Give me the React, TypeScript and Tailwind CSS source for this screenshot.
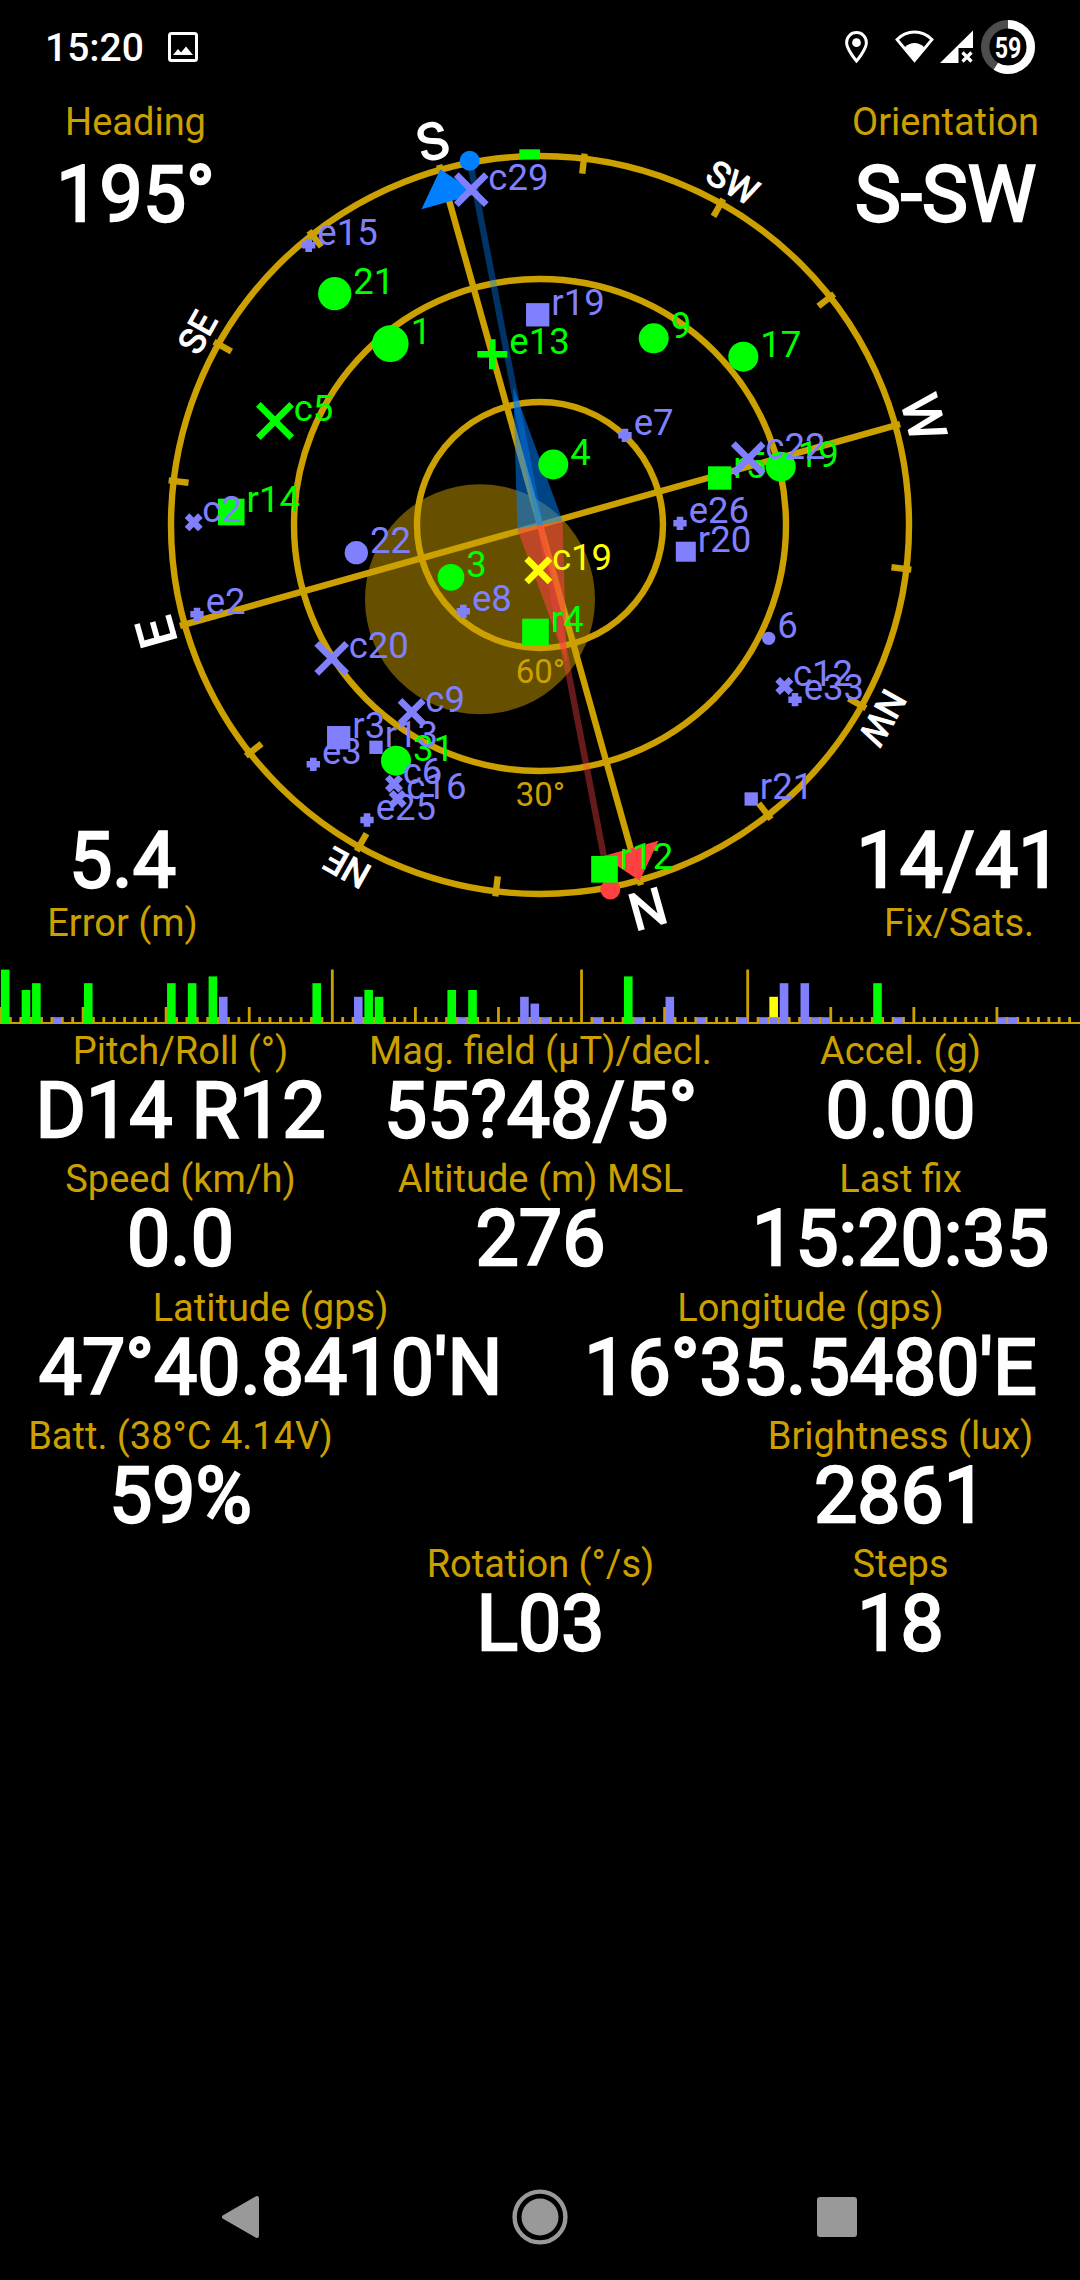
type SatKind = 'gps' | 'glonass' | 'beidou' | 'galileo';

interface Sat {
    kind: SatKind;
    label: string;
    x: number;
    y: number;
    level: number;
    color: string;
}

const GOLD = '#cca000';
const GREEN = '#00ff00';
const VIOLET = '#8080ff';
const YELLOW = '#ffff00';
const BLUE = '#0080ff';
const RED = '#ff4040';

const CX = 540;
const CY = 525;
const RADIUS = 369;
const HEADING = 195.65;

const sats: Sat[] = [
    { kind: 'gps', label: '1', x: 390.3, y: 343.7, level: 8, color: GREEN },
    { kind: 'gps', label: '3', x: 451, y: 577.3, level: 5, color: GREEN },
    { kind: 'gps', label: '4', x: 553.3, y: 464.5, level: 6, color: GREEN },
    { kind: 'gps', label: '6', x: 768.7, y: 638.3, level: 1, color: VIOLET },
    { kind: 'gps', label: '9', x: 653.7, y: 338.3, level: 6, color: GREEN },
    { kind: 'gps', label: '17', x: 743.3, y: 356.7, level: 6, color: GREEN },
    { kind: 'gps', label: '19', x: 780.7, y: 466.7, level: 6, color: GREEN },
    { kind: 'gps', label: '21', x: 334.7, y: 293.7, level: 7, color: GREEN },
    { kind: 'gps', label: '22', x: 356.3, y: 552.7, level: 4, color: VIOLET },
    { kind: 'gps', label: '31', x: 396, y: 760.7, level: 6, color: GREEN },
    { kind: 'glonass', label: 'r3', x: 338.7, y: 737.7, level: 4, color: VIOLET },
    { kind: 'glonass', label: 'r4', x: 535.5, y: 632, level: 5, color: GREEN },
    { kind: 'glonass', label: 'r5', x: 719.7, y: 478, level: 4, color: GREEN },
    { kind: 'glonass', label: 'r12', x: 604.5, y: 869.3, level: 5, color: GREEN },
    { kind: 'glonass', label: 'r13', x: 376, y: 747.3, level: 1, color: VIOLET },
    { kind: 'glonass', label: 'r14', x: 231.2, y: 512, level: 5, color: GREEN },
    { kind: 'glonass', label: 'r19', x: 537.7, y: 314.8, level: 4, color: VIOLET },
    { kind: 'glonass', label: 'r20', x: 685.8, y: 551.7, level: 3, color: VIOLET },
    { kind: 'glonass', label: 'r21', x: 751.2, y: 799, level: 1, color: VIOLET },
    { kind: 'beidou', label: 'c2', x: 193.7, y: 522.3, level: 1, color: VIOLET },
    { kind: 'beidou', label: 'c5', x: 275, y: 421, level: 7, color: GREEN },
    { kind: 'beidou', label: 'c6', x: 394, y: 783.7, level: 1, color: VIOLET },
    { kind: 'beidou', label: 'c9', x: 411.7, y: 712, level: 4, color: VIOLET },
    { kind: 'beidou', label: 'c12', x: 784.3, y: 686, level: 1, color: VIOLET },
    { kind: 'beidou', label: 'c16', x: 397.7, y: 799, level: 1, color: VIOLET },
    { kind: 'beidou', label: 'c19', x: 538.3, y: 570.3, level: 4, color: YELLOW },
    { kind: 'beidou', label: 'c20', x: 331.7, y: 658.3, level: 6, color: VIOLET },
    { kind: 'beidou', label: 'c22', x: 748.3, y: 458.7, level: 6, color: VIOLET },
    { kind: 'beidou', label: 'c29', x: 471.3, y: 189.7, level: 6, color: VIOLET },
    { kind: 'galileo', label: 'e2', x: 197, y: 614.3, level: 1, color: VIOLET },
    { kind: 'galileo', label: 'e3', x: 313.3, y: 764.3, level: 1, color: VIOLET },
    { kind: 'galileo', label: 'e7', x: 625, y: 435.3, level: 1, color: VIOLET },
    { kind: 'galileo', label: 'e8', x: 463.3, y: 611.3, level: 1, color: VIOLET },
    { kind: 'galileo', label: 'e13', x: 492.3, y: 354.3, level: 6, color: GREEN },
    { kind: 'galileo', label: 'e15', x: 308.7, y: 245.3, level: 1, color: VIOLET },
    { kind: 'galileo', label: 'e25', x: 367, y: 820, level: 1, color: VIOLET },
    { kind: 'galileo', label: 'e26', x: 680, y: 523.3, level: 1, color: VIOLET },
    { kind: 'galileo', label: 'e33', x: 795, y: 699.7, level: 1, color: VIOLET },
];

// [slot, level, color]
const bars: [number, number, string][] = [
    [0, 8, GREEN], [2, 5, GREEN], [3, 6, GREEN], [5, 1, VIOLET], [8, 6, GREEN],
    [16, 6, GREEN], [18, 6, GREEN], [20, 7, GREEN], [21, 4, VIOLET], [30, 6, GREEN],
    [34, 4, VIOLET], [35, 5, GREEN], [36, 4, GREEN], [43, 5, GREEN], [44, 1, VIOLET],
    [45, 5, GREEN], [50, 4, VIOLET], [51, 3, VIOLET], [52, 1, VIOLET], [57, 1, VIOLET],
    [60, 7, GREEN], [61, 1, VIOLET], [64, 4, VIOLET], [67, 1, VIOLET], [71, 1, VIOLET],
    [73, 1, VIOLET], [74, 4, YELLOW], [74, 1, VIOLET], [75, 6, VIOLET], [77, 6, VIOLET],
    [78, 1, VIOLET], [79, 1, VIOLET], [84, 6, GREEN], [86, 1, VIOLET], [96, 1, VIOLET],
    [97, 1, VIOLET],
];

const directions = ['N', 'NE', 'E', 'SE', 'S', 'SW', 'W', 'NW'];

function SatMark({ sat }: { sat: Sat }) {
    const { kind, label, x, y, level, color } = sat;
    const r = 5 + (level * 5) / 3;

    return (
        <g>
            {kind === 'gps' && <circle cx={x} cy={y} r={r} fill={color} />}
            {kind === 'glonass' && (
                <rect x={x - r} y={y - r} width={r * 2} height={r * 2} fill={color} />
            )}
            {kind === 'beidou' && (
                <path
                    d={`M${x - r} ${y - r}L${x + r} ${y + r}M${x - r} ${y + r}L${x + r} ${y - r}`}
                    stroke={color}
                    strokeWidth={6.6}
                />
            )}
            {kind === 'galileo' && (
                <path
                    d={`M${x - r} ${y}H${x + r}M${x} ${y - r}V${y + r}`}
                    stroke={color}
                    strokeWidth={6.6}
                />
            )}
            <text x={x + r + 2} y={y} fontSize={36.5} fill={color}>
                {label}
            </text>
        </g>
    );
}

function SkyView() {
    const ticks = Array.from({ length: 16 }, (_, i) => i * 22.5 - HEADING);

    return (
        <svg
            viewBox="0 96 1080 864"
            className="col-start-1 row-start-1 h-[864px] w-[1080px]"
            fill="none"
        >
            <circle cx={480} cy={599.3} r={115} fill="#665000" />
            <g stroke={GOLD} strokeWidth={6.4}>
                <circle cx={CX} cy={CY} r={RADIUS} />
                <circle cx={CX} cy={CY} r={246} />
                <circle cx={CX} cy={CY} r={123} />
                {ticks.map((a, i) => (
                    <line
                        key={a}
                        x1={CX}
                        x2={CX}
                        y1={CY - 374}
                        y2={i % 4 === 0 ? CY : CY - 354}
                        transform={`rotate(${a} ${CX} ${CY})`}
                    />
                ))}
            </g>
            <g fill={GOLD} fontSize={33} textAnchor="middle">
                <text x={540.5} y={682.7}>60°</text>
                <text x={540.5} y={805.7}>30°</text>
            </g>
            <g fill="#fff" stroke="#fff" textAnchor="middle">
                {directions.map((d, i) => (
                    <text
                        key={d}
                        x={CX}
                        y={CY - 380.5}
                        fontSize={d.length === 1 ? 51 : 35.5}
                        strokeWidth={d.length === 1 ? 1.6 : 1.2}
                        transform={`rotate(${i * 45 - HEADING} ${CX} ${CY})`}
                    >
                        {d}
                    </text>
                ))}
            </g>

            <g transform={`rotate(${-HEADING} ${CX} ${CY})`}>
                <path d="M540 155.5L569 189H511Z" fill={RED} />
                <path d="M540 894.5L569 861H511Z" fill={BLUE} />
            </g>

            {/* magnetic needle */}
            <g opacity={0.4}>
                <line x1={469.7} y1={160.7} x2={CX} y2={CY} stroke={BLUE} strokeWidth={6.4} />
            </g>
            <g opacity={0.4}>
                <line x1={610.3} y1={890} x2={CX} y2={CY} stroke={RED} strokeWidth={6.4} />
            </g>
            <path d="M513.3 386.7L562.6 520.9L517.4 529.3Z" fill={BLUE} fillOpacity={0.53} />
            <path d="M566.7 663.3L562.6 520.9L517.4 529.3Z" fill={RED} fillOpacity={0.56} />
            <circle cx={469.7} cy={160.7} r={10} fill={BLUE} />
            <circle cx={610.3} cy={889.5} r={10} fill={RED} />
            <rect x={519.3} y={149.3} width={20.7} height={10} fill={GREEN} />

            {sats.map((s) => (
                <SatMark key={s.label} sat={s} />
            ))}
        </svg>
    );
}

function SignalBars() {
    const step = 1080 / 104;

    return (
        <svg viewBox="0 960 1080 67" className="h-[67px] w-[1080px]">
            <rect x={0} y={1022} width={1080} height={2} fill={GOLD} />
            {Array.from({ length: 104 }, (_, i) => {
                const tall = i === 32 || i === 56 || i === 72;
                const h = tall ? 54.5 : i % 8 === 0 ? 17 : 7;
                return (
                    <rect
                        key={i}
                        x={i * step - 1.4}
                        y={1024 - h}
                        width={2.8}
                        height={h}
                        fill={GOLD}
                    />
                );
            })}
            {bars.map(([slot, level, color], i) => (
                <rect
                    key={i}
                    x={slot * step + 0.9}
                    y={1024 - level * 6.8}
                    width={8.6}
                    height={level * 6.8}
                    fill={color}
                />
            ))}
        </svg>
    );
}

function StatusBar() {
    return (
        <header className="flex h-[96px] items-start justify-between pr-[45px] pl-[45px]">
            <div className="flex items-start">
                <span className="mt-[25px] text-[39px] leading-[46px] font-medium">15:20</span>
                <svg viewBox="0 0 30 30" className="mt-[32px] ml-[24px] size-[30px]" fill="none">
                    <rect x={1.5} y={1.5} width={27} height={27} rx={2} stroke="#fff" strokeWidth={3} />
                    <path d="M5 23L10 17L13 20.5L18 14.5L25 23Z" fill="#fff" />
                </svg>
            </div>
            <div className="flex items-start">
                <svg viewBox="0 0 23 33" className="mt-[31px] mr-[27px] h-[33px] w-[23px]" fill="none">
                    <path
                        d="M11.5 1.6C6 1.6 1.6 6 1.6 11.5C1.6 18.5 11.5 30 11.5 30S21.4 18.5 21.4 11.5C21.4 6 17 1.6 11.5 1.6Z"
                        stroke="#fff"
                        strokeWidth={3}
                    />
                    <circle cx={11.5} cy={11.7} r={4.4} fill="#fff" />
                </svg>
                <svg viewBox="0 0 39 33" className="mt-[30px] mr-[6px] h-[33px] w-[39px]" fill="none">
                    <path
                        d="M2 9.5C12 -0.5 27 -0.5 37 9.5L19.5 30.5Z"
                        stroke="#fff"
                        strokeWidth={2.8}
                    />
                    <path d="M9.5 17.5C15 11.5 24 11.5 29.5 17.5L19.5 31Z" fill="#fff" />
                </svg>
                <svg viewBox="0 0 33 33" className="mt-[30px] mr-[8px] h-[33px] w-[33px]" fill="none">
                    <path d="M33 0.5V18H18.5V33H0Z" fill="#fff" />
                    <path d="M22.5 22.5L31.5 31.5M31.5 22.5L22.5 31.5" stroke="#fff" strokeWidth={3.2} />
                </svg>
                <svg viewBox="0 0 54 54" className="mt-[20px] size-[54px]" fill="none">
                    <circle cx={27} cy={27} r={22.8} stroke="#4d4d4d" strokeWidth={8.4} />
                    <circle
                        cx={27}
                        cy={27}
                        r={22.8}
                        stroke="#fff"
                        strokeWidth={8.4}
                        pathLength={100}
                        strokeDasharray="59 41"
                        transform="rotate(-90 27 27)"
                    />
                    <text
                        transform="translate(27 37.8) scale(0.8 1)"
                        fontSize={29}
                        fontWeight={700}
                        fill="#fff"
                        textAnchor="middle"
                    >
                        59
                    </text>
                </svg>
            </div>
        </header>
    );
}

function Readout({ label, value }: { label: string; value: string }) {
    return (
        <div className="flex flex-1 flex-col items-center pl-px whitespace-nowrap">
            <span className="text-[38px] leading-[48px] text-[#cca000]">{label}</span>
            <span className="text-[77px] leading-[72px] [-webkit-text-stroke:2.4px_#fff]">{value}</span>
        </div>
    );
}

function Corner({ label, value, flip }: { label: string; value: string; flip?: boolean }) {
    return (
        <div className={`flex items-center whitespace-nowrap ${flip ? 'flex-col-reverse' : 'flex-col'}`}>
            <span className="text-[38px] leading-[46px] text-[#cca000]">{label}</span>
            <span
                className={`text-[77px] [-webkit-text-stroke:2.4px_#fff] ${flip ? 'leading-[77px]' : 'leading-[100px]'}`}
            >
                {value}
            </span>
        </div>
    );
}

const rows = [
    [
        ['Pitch/Roll (°)', 'D14 R12'],
        ['Mag. field (µT)/decl.', '55?48/5°'],
        ['Accel. (g)', '0.00'],
    ],
    [
        ['Speed (km/h)', '0.0'],
        ['Altitude (m) MSL', '276'],
        ['Last fix', '15:20:35'],
    ],
    [
        ['Latitude (gps)', "47°40.8410'N"],
        ['Longitude (gps)', "16°35.5480'E"],
    ],
    [
        ['Batt. (38°C 4.14V)', '59%'],
        ['', ''],
        ['Brightness (lux)', '2861'],
    ],
    [
        ['', ''],
        ['Rotation (°/s)', 'L03'],
        ['Steps', '18'],
    ],
];

export default function App() {
    return (
        <div className="flex h-[2280px] w-[1080px] flex-col overflow-hidden bg-black font-[Roboto,sans-serif] text-white">
            <StatusBar />

            <section className="grid h-[864px]">
                <SkyView />
                <div className="col-start-1 row-start-1 flex flex-col justify-between">
                    <div className="flex justify-between">
                        <div className="flex w-[271px] justify-center pt-[3px]">
                            <Corner label="Heading" value="195°" />
                        </div>
                        <div className="flex w-[269px] justify-center pt-[3px]">
                            <Corner label="Orientation" value="S-SW" />
                        </div>
                    </div>
                    <div className="flex justify-between">
                        <div className="flex w-[245px] justify-center pb-[14px]">
                            <Corner label="Error (m)" value="5.4" flip />
                        </div>
                        <div className="flex w-[242px] justify-center pb-[14px]">
                            <Corner label="Fix/Sats." value="14/41" flip />
                        </div>
                    </div>
                </div>
            </section>

            <SignalBars />

            <main className="flex-1">
                {rows.map((row, i) => (
                    <div key={i} className="flex h-[128.25px]">
                        {row.map(([label, value], j) => (
                            <Readout key={j} label={label} value={value} />
                        ))}
                    </div>
                ))}
            </main>

            <nav className="flex h-[126px] items-center pl-[221px]">
                <svg viewBox="0 0 38 44" className="h-[44px] w-[38px]">
                    <path
                        d="M3 22L36 3V41Z"
                        fill="#999"
                        stroke="#999"
                        strokeWidth={4}
                        strokeLinejoin="round"
                    />
                </svg>
                <svg viewBox="0 0 56 56" className="ml-[253px] size-[56px]" fill="none">
                    <circle cx={28} cy={28} r={25.4} stroke="#999" strokeWidth={4.4} />
                    <circle cx={28} cy={28} r={18.5} fill="#999" />
                </svg>
                <div className="ml-[249px] size-[40px] rounded-[3px] bg-[#999]" />
            </nav>
        </div>
    );
}
